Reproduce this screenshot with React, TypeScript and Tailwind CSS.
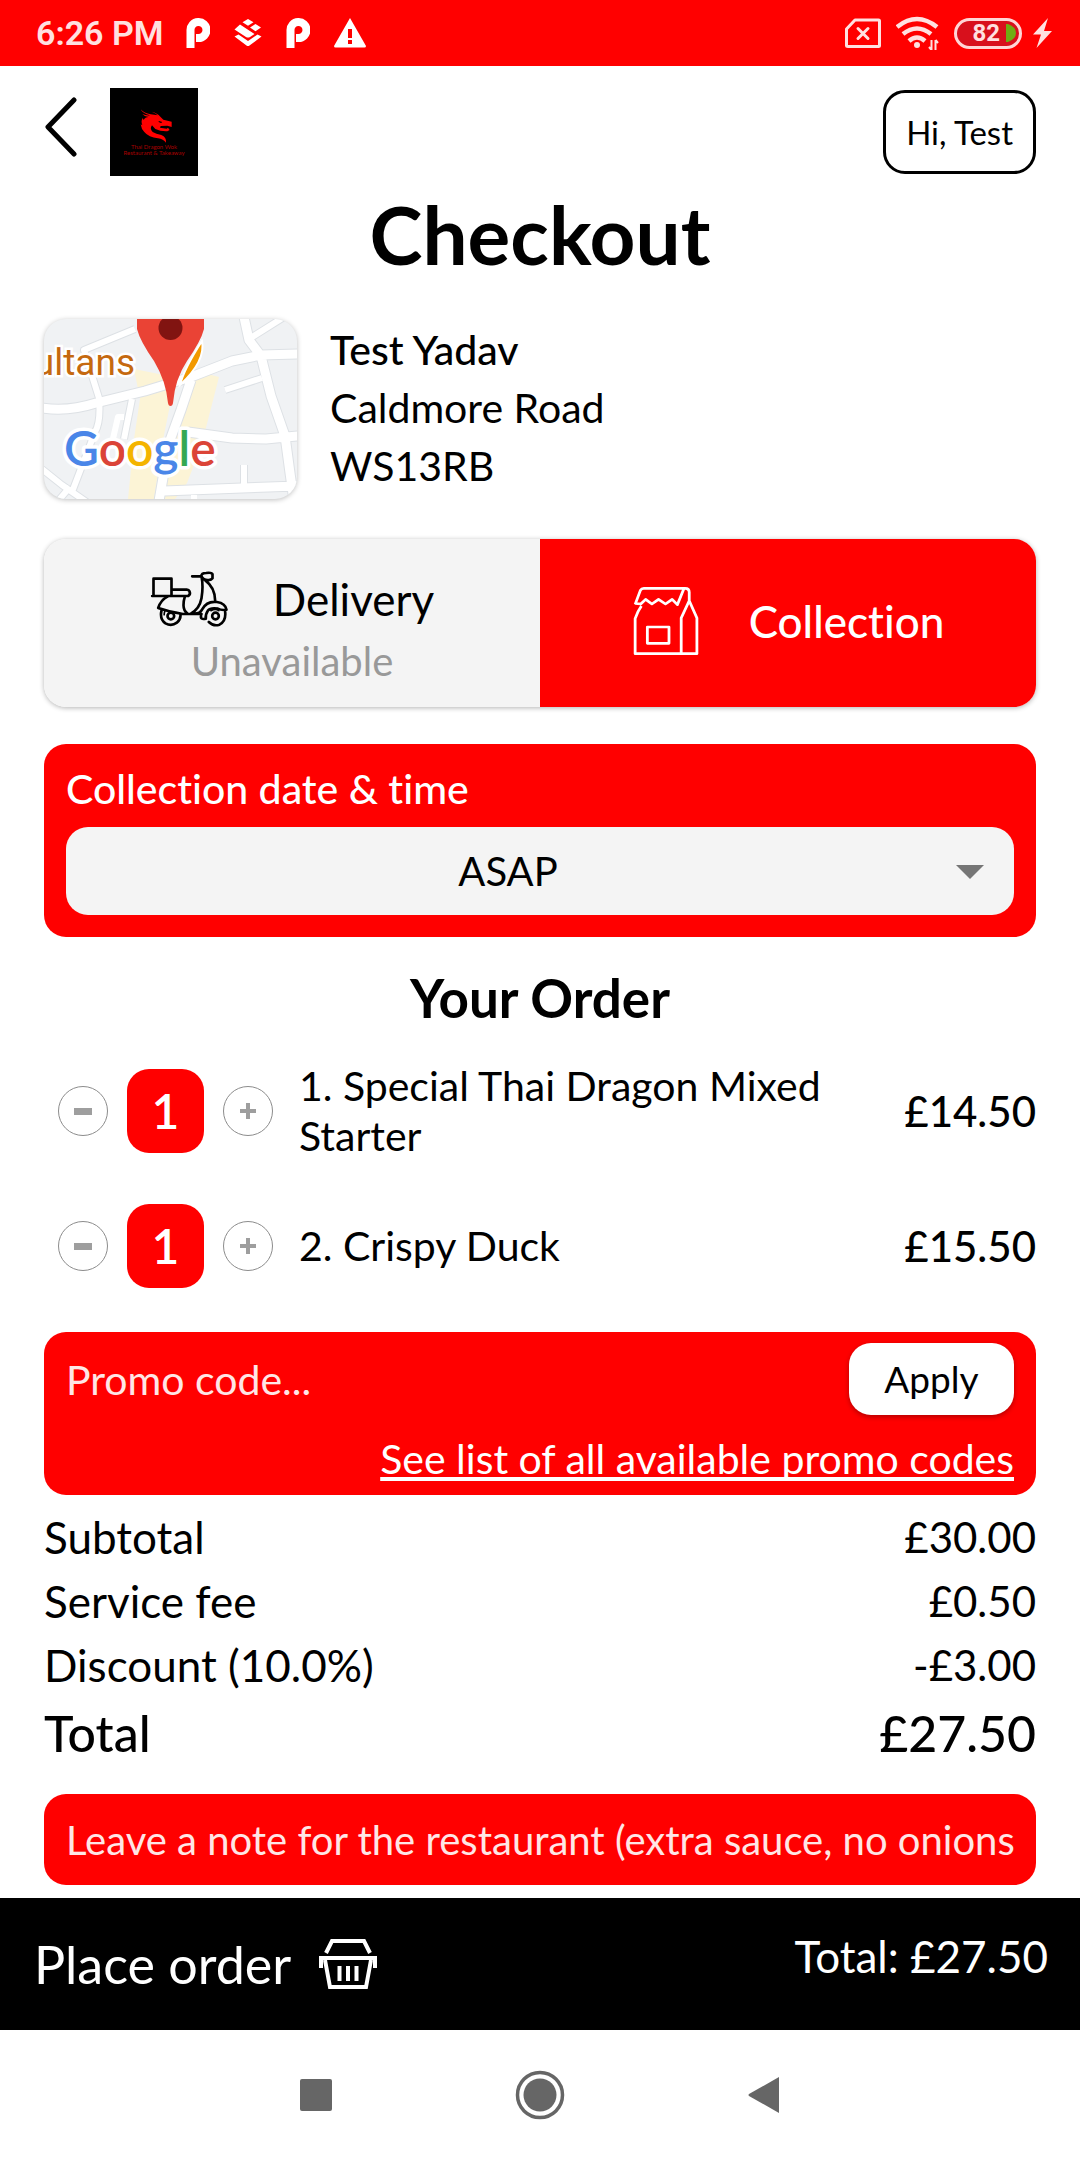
import { useState } from "react";
import type { ReactNode } from "react";

type OrderItem = { id: number; name: string; qty: number; price: number };

const initialItems: OrderItem[] = [
  { id: 1, name: "Special Thai Dragon Mixed Starter", qty: 1, price: 14.5 },
  { id: 2, name: "Crispy Duck", qty: 1, price: 15.5 },
];

const SERVICE_FEE = 0.5;
const DISCOUNT_RATE = 0.1;

function money(value: number) {
  return `£${value.toFixed(2)}`;
}

function PaymentMark() {
  return (
    <svg viewBox="0 0 24 30" className="h-[30px] w-6" fill="none" stroke="white" strokeWidth="8" aria-hidden="true">
      <path d="M4.500 30V12.500a8 8 0 1 1 8 7.500H10" />
    </svg>
  );
}

function LayersMark() {
  return (
    <svg viewBox="0 0 28 28" className="h-7 w-7" fill="white" aria-hidden="true">
      <path d="M14 0l5.500 3.300-5.500 3.500-5.500-3.500zM21.500 5l5.500 3.500-5.500 3.800-5.500-3.800zM6 5.500l14.500 9.500-4.500 3q-2 1-4 0L0.500 10.500z" />
      <path d="M0.500 17.500l4-2 9.500 6.500 9.500-6.500 4 2-12 9q-1.500 1-3 0z" />
    </svg>
  );
}

function StatusBar() {
  return (
    <div className="flex h-[66px] items-center justify-between bg-[#ff0000] pr-7 pl-9 text-[#ffe0e0]">
      <div className="flex items-center">
        <span className="font-[Roboto] text-[34px] leading-10 font-semibold">6:26 PM</span>
        <div className="ml-[22px] flex items-center gap-6">
          <PaymentMark />
          <LayersMark />
          <PaymentMark />
          <svg viewBox="0 0 32 30" className="h-[30px] w-8" fill="white" aria-hidden="true">
            <path fillRule="evenodd" d="M16 0l16 28q0 1.500-1.500 1.500H1.500Q0 29.500 0 28zM14 11v9h4v-9zM14 22v4h4v-4z" />
          </svg>
        </div>
      </div>
      <div className="flex items-center">
        <svg viewBox="0 0 36 30" className="h-[30px] w-9" fill="none" stroke="currentColor" strokeWidth="3" strokeLinejoin="round" aria-hidden="true">
          <path d="M10 2h23.500q1 0 1 1v24.500q0 1-1 1H3q-1.500 0-1.500-1V11z" />
          <path d="M13 10.500l10 10M23 10.500l-10 10" strokeLinecap="round" />
        </svg>
        <svg viewBox="0 0 43 34" className="ml-[15px] h-[34px] w-[43px]" fill="none" stroke="currentColor" strokeWidth="4.500" aria-hidden="true">
          <path d="M1 11q20-16 40 0M7 18q14-11 28 0M13 25q8-7 16 0" />
          <circle cx="21" cy="29" r="3" fill="currentColor" stroke="none" />
          <path d="M35.500 24v10M33 31l2.500 3M39.500 34V24M42 27l-2.500-3" strokeWidth="2" />
        </svg>
        <div className="ml-[15px] flex h-[31px] w-[68px] items-center justify-end gap-[6px] overflow-hidden rounded-full border-[3px] border-[#ffd5d5] bg-[#d8101c] pr-[3px]">
          <span className="font-[Roboto] text-[24px] leading-6 font-bold">82</span>
          <svg viewBox="0 0 10 18" className="h-[18px] w-[10px]" aria-hidden="true">
            <path d="M0 0h2q8 3 8 9t-8 9h-2z" fill="#6fae12" />
          </svg>
        </div>
        <svg viewBox="0 0 20 30" className="ml-[10px] h-[30px] w-5" fill="currentColor" aria-hidden="true">
          <path d="M16 0L1 16.500h8L4.500 30 20 13h-8z" />
        </svg>
      </div>
    </div>
  );
}

function BrandLogo() {
  return (
    <svg viewBox="0 0 264 264" className="h-[88px] w-[88px] bg-black" role="img" aria-label="Thai Dragon">
      <path
        d="M92 64Q102 76 122 79L143 82Q136 75 125 71Q142 75 151 86L160 95L185 101V117L172 113L152 114L150 119L170 122L174 119L179 126L172 130Q152 131 136 123L126 112Q118 122 128 132Q138 138 154 141Q170 148 168 164Q160 153 144 151Q116 148 103 132Q94 124 92 109L97 112Q92 100 98 90L101 96Q105 87 116 87Q103 86 97 78Q108 83 120 82Q98 76 92 64Z"
        fill="#ff0000"
      />
      <path d="M146 99l11 3-4 3-7-3z" fill="black" />
      <text x="132" y="184" textAnchor="middle" className="fill-[#a80000] font-[Lato] text-[18px]">Thai Dragon Wok</text>
      <text x="132" y="202" textAnchor="middle" className="fill-[#a80000] font-[Lato] text-[18px]">Restaurant &amp; Takeaway</text>
    </svg>
  );
}

function MapPreview() {
  return (
    <svg viewBox="0 0 253 180" className="h-[180px] w-[253px] shrink-0 rounded-[22px] bg-[#f0f2f4] shadow-[0_1px_5px_rgba(0,0,0,0.25)]" role="img" aria-label="Map of Caldmore Road">
      <path d="M90 50l30 6 6 30-8 40-8 54H84l6-60 6-40zM152 52l23 6-18 70-14 36-12 16h-10l8-60z" fill="#fcf4d6" />
      <g fill="none" strokeLinejoin="round">
        <g stroke="#dde1e5" strokeWidth="11">
          <path d="M-2 89q26 4 54-5l49-12 46-14 41-16 29-6 38-1M200-2l5 23 12 16 10 40 14 40 5 37 4 28M147 61l-10 30-12 33-10 58M120 172l78-3 56-2M144 113l44 6 34 1 32-3" />
        </g>
        <g stroke="#dde1e5" strokeWidth="8">
          <path d="M91 10L40 31l15 48q2 24-4 34l-23 60M240-2l-35 22M181 71l37-12M200 146v23M-2 150l20 16 26 18M14 182l12-14M88 80l-8 40" />
        </g>
        <g stroke="white" strokeWidth="9">
          <path d="M-2 89q26 4 54-5l49-12 46-14 41-16 29-6 38-1M200-2l5 23 12 16 10 40 14 40 5 37 4 28M147 61l-10 30-12 33-10 58M120 172l78-3 56-2M144 113l44 6 34 1 32-3" />
        </g>
        <g stroke="white" strokeWidth="6">
          <path d="M91 10L40 31l15 48q2 24-4 34l-23 60M240-2l-35 22M181 71l37-12M200 146v23M-2 150l20 16 26 18M14 182l12-14M88 80l-8 40M80 98h-6l-6 26M150 176v6" />
        </g>
      </g>
      <path d="M158 22q4 20-22 44 4-16 22-44z" fill="#f29900" stroke="white" strokeWidth="2" />
      <path d="M126.500 87q-2 0-2.500-3-2-22-14-42Q96 22 93 10V-10h67v20q-3 12-17 32-12 18-14 42-.5 3-2.500 3z" fill="#ea4335" />
      <circle cx="126.500" cy="9" r="12" fill="#811411" />
      <text x="91" y="56" textAnchor="end" stroke="white" strokeWidth="5" paintOrder="stroke" className="fill-[#c5690f] font-[Roboto] text-[37px]">ultans</text>
      <text x="20" y="147" stroke="white" strokeWidth="7" strokeLinejoin="round" paintOrder="stroke" className="font-[Lato] text-[48px] font-semibold">
        <tspan fill="#4a86e8">G</tspan>
        <tspan fill="#db4437">o</tspan>
        <tspan fill="#f4b400">o</tspan>
        <tspan fill="#4a86e8">g</tspan>
        <tspan fill="#34a853">l</tspan>
        <tspan fill="#db4437">e</tspan>
      </text>
    </svg>
  );
}

function ScooterIcon() {
  return (
    <svg viewBox="358 160 236 174" className="h-[58px] w-[79px]" fill="none" stroke="currentColor" strokeWidth="8" strokeLinecap="round" strokeLinejoin="round" aria-hidden="true">
      <path d="M368 238v-52h54v52M364 238h108q8-4 4-14-2-5-8-5h-44" />
      <path d="M410 240q-20 10-28 34 30 10 74 18h56M462 240q-4 12-4 26 0 16 12 25M484 179h28q6 30 0 66-6 32-32 46M512 179q-2-10 14-10 18-2 19 4v12q-4 6-14 5-14 0-19-11zM524 192q28 20 29 60M484 290q22 4 30-12 14-26 44-22 26 4 29 23-14 3-26-3-22-4-30 6-8 12-6 24-18 4-14-10" />
      <path d="M392 282q-6 26 12 38 18 10 34-2 12-10 11-24M534 316q14 14 32 8 20-10 17-38" />
      <circle cx="420" cy="298" r="10" />
      <circle cx="554" cy="298" r="10" />
      <path d="M402 284q-2 4-2 10M540 282q14-8 24 0" strokeWidth="5" />
    </svg>
  );
}

function BagIcon() {
  return (
    <svg viewBox="286 202 192 210" preserveAspectRatio="none" className="h-[70px] w-[67px]" fill="none" stroke="currentColor" strokeWidth="8" strokeLinejoin="round" aria-hidden="true">
      <path d="M313 262q-10 14-18 38v105h177V298l-22-52-23 52v106M295 257l15-42q3-6 10-6h118q12 0 12 12v28M434 212l-18 46-15-16-19 14-20-14-19 14-18-14-14 14-16-2" />
      <path d="M330 325h62v49h-62z" />
    </svg>
  );
}

function BasketIcon() {
  return (
    <svg viewBox="0 0 58 50" className="h-[50px] w-[58px]" fill="none" stroke="currentColor" strokeWidth="4" aria-hidden="true">
      <path d="M7 14l6-12h32l6 12M2 29V19h54v10M6 21l5 27h36l5-27" />
      <path d="M20.500 27v15M29 27v15M37.500 27v15" />
    </svg>
  );
}

function StepButton({ label, onClick, children }: { label: string; onClick: () => void; children: ReactNode }) {
  return (
    <button
      aria-label={label}
      onClick={onClick}
      className="flex h-[50px] w-[50px] items-center justify-center rounded-full border border-[#8c8c8c]"
    >
      <svg viewBox="0 0 18 18" className="h-[18px] w-[18px]" fill="#9e9e9e" aria-hidden="true">
        {children}
      </svg>
    </button>
  );
}

export default function App() {
  const [items, setItems] = useState(initialItems);
  const [promo, setPromo] = useState("");
  const [note, setNote] = useState("");

  const subtotal = items.reduce((sum, item) => sum + item.price * item.qty, 0);
  const discount = subtotal * DISCOUNT_RATE;
  const total = subtotal + SERVICE_FEE - discount;

  const summary = [
    { label: "Subtotal", value: money(subtotal) },
    { label: "Service fee", value: money(SERVICE_FEE) },
    { label: "Discount (10.0%)", value: `-${money(discount)}` },
  ];

  function changeQty(id: number, delta: number) {
    setItems((list) =>
      list.map((item) => (item.id === id ? { ...item, qty: Math.max(0, item.qty + delta) } : item))
    );
  }

  return (
    <div className="flex min-h-screen flex-col bg-white font-[Lato,sans-serif] text-black [font-variant-ligatures:none]">
      <StatusBar />

      <main className="flex-1 px-11 pb-[13px]">
        <header className="flex items-center pt-[22px]">
          <button aria-label="Back" className="flex h-[88px] w-[66px] items-center pb-[10px]">
            <svg viewBox="0 0 34 60" className="h-[60px] w-[34px]" fill="none" stroke="currentColor" strokeWidth="5" strokeLinecap="round" strokeLinejoin="round" aria-hidden="true">
              <path d="M30 3L4 30l26 27" />
            </svg>
          </button>
          <BrandLogo />
          <button className="ml-auto h-[84px] rounded-[22px] border-[3px] border-black px-5 text-[33px] leading-10">
            Hi, Test
          </button>
        </header>

        <h1 className="mt-[10px] text-center text-[80px] leading-[96px] font-bold">Checkout</h1>

        <section className="mt-[37px] flex">
          <MapPreview />
          <address className="ml-[33px] pt-[2px] text-[41px] leading-[58px] not-italic">
            <p className="font-medium">Test Yadav</p>
            <p>Caldmore Road</p>
            <p>WS13RB</p>
          </address>
        </section>

        <div className="mt-10 grid h-[168px] grid-cols-2 overflow-hidden rounded-[22px] shadow-[0_1px_5px_rgba(0,0,0,0.3)]">
          <button className="flex flex-col items-center justify-center bg-[#f4f4f4] pt-3">
            <span className="flex items-center gap-11 text-[44px] leading-[64px]">
              <ScooterIcon />
              Delivery
            </span>
            <span className="text-[40px] leading-[60px] text-[#999999]">Unavailable</span>
          </button>
          <button className="flex items-center justify-center gap-[50px] bg-[#ff0000] pb-1 text-[44px] leading-[64px] font-medium text-white">
            <BagIcon />
            Collection
          </button>
        </div>

        <section className="mt-[37px] rounded-[22px] bg-[#ff0000] px-[22px] pt-[15px] pb-[22px]">
          <label htmlFor="slot" className="mb-2 block text-[41px] leading-[60px] font-medium text-white">
            Collection date &amp; time
          </label>
          <div className="relative">
            <select
              id="slot"
              className="h-[88px] w-full appearance-none rounded-[22px] bg-[#f4f4f4] pr-16 text-center text-[40px]"
            >
              <option>ASAP</option>
            </select>
            <svg viewBox="0 0 28 14" className="pointer-events-none absolute top-[38px] right-[30px] h-[14px] w-7" aria-hidden="true">
              <path d="M0 0h28L14 14z" fill="#757575" />
            </svg>
          </div>
        </section>

        <h2 className="mt-[31px] text-center text-[53px] leading-[60px] font-bold">Your Order</h2>

        <ul className="mt-[33px] flex flex-col gap-[35px]">
          {items.map((item) => (
            <li key={item.id} className="flex min-h-[100px] items-center">
              <div className="flex items-center gap-[19px] pl-[14px]">
                <StepButton label={`Remove one ${item.name}`} onClick={() => changeQty(item.id, -1)}>
                  <path d="M0 6h18v7H0z" />
                </StepButton>
                <span className="h-[84px] w-[77px] rounded-[22px] bg-[#ff0000] text-center text-[48px] leading-[84px] font-semibold text-white">
                  {item.qty}
                </span>
                <StepButton label={`Add one ${item.name}`} onClick={() => changeQty(item.id, 1)}>
                  <path d="M7 1h4v6h6v4h-6v6H7v-6H1V7h6z" />
                </StepButton>
              </div>
              <p className="ml-[26px] flex-1 pr-16 text-[41px] leading-[50px]">{`${item.id}. ${item.name}`}</p>
              <span className="text-[42px] leading-[60px] font-medium">{money(item.price * item.qty)}</span>
            </li>
          ))}
        </ul>

        <section className="mt-9 flex flex-col gap-[14px] rounded-[22px] bg-[#ff0000] px-[22px] pt-[11px] pb-[6px] text-white">
          <div className="flex items-center">
            <input
              aria-label="Promo code"
              placeholder="Promo code..."
              value={promo}
              onChange={(e) => setPromo(e.target.value)}
              className="h-[72px] min-w-0 flex-1 bg-transparent text-[41px] outline-none placeholder:text-[#ffe6e6]"
            />
            <button className="h-[72px] w-[165px] rounded-[22px] bg-white text-[37px] text-black shadow-[0_2px_5px_rgba(0,0,0,0.3)]">
              Apply
            </button>
          </div>
          <a href="#promo-codes" className="self-end text-[41px] leading-[60px] underline [text-decoration-skip-ink:none]">
            See list of all available promo codes
          </a>
        </section>

        <table className="mt-[10px] w-full text-[44px] leading-[64px]">
          <tbody>
            {summary.map((row) => (
              <tr key={row.label}>
                <th scope="row" className="p-0 text-left font-normal">{row.label}</th>
                <td className="p-0 text-right text-[42px] leading-[64px]">{row.value}</td>
              </tr>
            ))}
            <tr className="text-[50px] leading-[72px] font-medium">
              <th scope="row" className="p-0 text-left font-medium">Total</th>
              <td className="p-0 text-right">{money(total)}</td>
            </tr>
          </tbody>
        </table>

        <div className="mt-[25px] rounded-[22px] bg-[#ff0000] px-[22px]">
          <input
            aria-label="Note for the restaurant"
            placeholder="Leave a note for the restaurant (extra sauce, no onions, etc.)"
            value={note}
            onChange={(e) => setNote(e.target.value)}
            className="block h-[91px] w-full bg-transparent text-[40px] text-white outline-none placeholder:text-[#ffe6e6]"
          />
        </div>
      </main>

      <footer>
        <div className="flex h-[132px] items-center justify-between bg-black pr-8 pl-[34px] text-white">
          <button className="flex items-center gap-7 text-[52px] leading-[72px]">
            Place order
            <BasketIcon />
          </button>
          <span className="pb-4 text-[44px] leading-[64px]">Total: {money(total)}</span>
        </div>
        <nav className="flex h-[130px] items-center justify-center gap-[183px] bg-white text-[#666666]">
          <button aria-label="Recent apps">
            <svg viewBox="0 0 32 32" className="h-8 w-8" fill="currentColor"><rect width="32" height="32" rx="2" /></svg>
          </button>
          <button aria-label="Home">
            <svg viewBox="0 0 50 50" className="h-[50px] w-[50px]">
              <circle cx="25" cy="25" r="22.500" fill="none" stroke="currentColor" strokeWidth="3.500" />
              <circle cx="25" cy="25" r="16.500" fill="currentColor" />
            </svg>
          </button>
          <button aria-label="Back one screen">
            <svg viewBox="0 0 32 38" className="h-[38px] w-8" fill="currentColor"><path d="M31 1v36L1 20q-1-1 0-2z" /></svg>
          </button>
        </nav>
      </footer>
    </div>
  );
}
